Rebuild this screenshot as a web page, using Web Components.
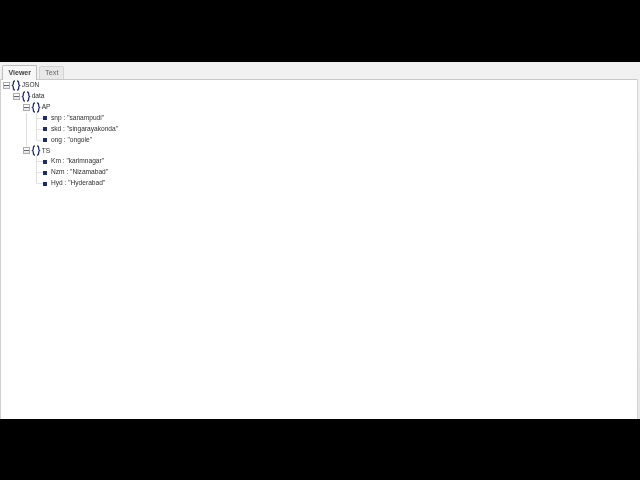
<!DOCTYPE html>
<html>
<head>
<meta charset="utf-8">
<title>JSON Viewer</title>
<style>
  html, body { margin: 0; background: #000; height: 100%; overflow: hidden; }
  body { font-family: "Liberation Sans", Arial, sans-serif; }
</style>
</head>
<body>
<viewer-window>
  <viewer-tab slot="tabs" active>Viewer</viewer-tab>
  <viewer-tab slot="tabs">Text</viewer-tab>
  <tree-node label="JSON" root last>
    <tree-node label="data" last>
      <tree-node label="AP">
        <tree-leaf>snp : "sanampudi"</tree-leaf>
        <tree-leaf>skd : "singarayakonda"</tree-leaf>
        <tree-leaf last>ong : "ongole"</tree-leaf>
      </tree-node>
      <tree-node label="TS" last>
        <tree-leaf>Km : "karimnagar"</tree-leaf>
        <tree-leaf>Nzm : "Nizamabad"</tree-leaf>
        <tree-leaf last>Hyd : "Hyderabad"</tree-leaf>
      </tree-node>
    </tree-node>
  </tree-node>
</viewer-window>
<script>
class ViewerWindow extends HTMLElement {
  constructor() {
    super();
    this.attachShadow({ mode: "open" });
    this.shadowRoot.innerHTML = `
    <style>
      :host {
        display: flex;
        flex-direction: column;
        height: 357px;
        margin-top: 62px;
        background: linear-gradient(#f1f1f1, #e4e4e4);
        filter: blur(.4px);
      }
      .tabs {
        display: flex;
        align-items: flex-end;
        gap: 2px;
        height: 17px;
        padding-left: 2px;
        flex: none;
      }
      .panel {
        flex: 1;
        background: #fff;
        margin-left: 1px;
        margin-right: 3px;
        border-top: 1px solid #c9c9c9;
        padding: .2px 0 0 2px;
        box-shadow: -1px 0 0 #cfcfcf, 1px 0 0 #d4d4d4;
      }
    </style>
    <div class="tabs"><slot name="tabs"></slot></div>
    <div class="panel"><slot></slot></div>
    `;
  }
}

class ViewerTab extends HTMLElement {
  constructor() {
    super();
    this.attachShadow({ mode: "open" });
    this.shadowRoot.innerHTML = `
    <style>
      :host {
        display: block;
        box-sizing: border-box;
        height: 13px;
        padding: 0 4.5px;
        font: 7.4px/12px "Liberation Sans", Arial, sans-serif;
        color: #666;
        background: #e8e8e8;
        border: 1px solid #d4d4d4;
        border-bottom: none;
        border-radius: 2px 2px 0 0;
      }
      :host([active]) {
        height: 15px;
        margin-bottom: -1px;
        line-height: 14px;
        padding: 0 5.5px;
        font-size: 7px;
        font-weight: bold;
        color: #3c3c3c;
        background: #f7f7f7;
        border-color: #bdbdbd;
        position: relative;
        z-index: 1;
      }
    </style>
    <slot></slot>
    `;
  }
}

class TreeNode extends HTMLElement {
  constructor() {
    super();
    this.attachShadow({ mode: "open" });
  }

  connectedCallback() {
    this.shadowRoot.innerHTML = `
    <style>
      :host {
        display: block;
        font: 6.6px/10.9px "Liberation Sans", Arial, sans-serif;
        color: #2e2e2e;
      }
      :host(:not([root])) { margin-left: 6px; }
      .row {
        display: flex;
        align-items: center;
        height: 10.9px;
      }
      .expander {
        flex: none;
        box-sizing: border-box;
        width: 7px;
        height: 7px;
        margin-right: 1px;
        border: 1px solid #aaacb2;
        background: linear-gradient(#fff, #e4e7ec);
        display: flex;
        align-items: center;
        justify-content: center;
      }
      .expander::before {
        content: "";
        width: 5px;
        height: 1px;
        background: #666;
      }
      svg { flex: none; display: block; margin-right: .7px; }
      .children {
        margin-left: 3px;
        border-left: 1px solid #dedede;
      }
      :host([last]) .children { border-left-color: transparent; }
    </style>
    <div class="row">
      <span class="expander"></span>
      <svg width="10" height="11" viewBox="0 0 10 11" fill="none" stroke="#1d2a6e" stroke-width="1.25">
        <path d="M4 .8C2.5 .8 2.3 2 2.3 3.4S2.3 5 1.5 5.5C2.3 6 2.3 6.2 2.3 7.6S2.5 10.2 4 10.2"/>
        <path d="M6 .8C7.5 .8 7.7 2 7.7 3.4S7.7 5 8.5 5.5C7.7 6 7.7 6.2 7.7 7.6S7.5 10.2 6 10.2"/>
      </svg>
      <span>${this.getAttribute("label")}</span>
    </div>
    <div class="children"><slot></slot></div>
    `;
  }
}

class TreeLeaf extends HTMLElement {
  constructor() {
    super();
    this.attachShadow({ mode: "open" });
    this.shadowRoot.innerHTML = `
    <style>
      :host {
        display: flex;
        align-items: center;
        height: 10.9px;
        margin-left: 9px;
        font: 6.6px/10.9px "Liberation Sans", Arial, sans-serif;
        color: #2e2e2e;
        white-space: pre;
        background: linear-gradient(#dedede, #dedede) no-repeat 0 0 / 1px 100%;
      }
      :host([last]) { background-size: 1px 50%; }
      .dash {
        flex: none;
        width: 6px;
        height: 1px;
        margin-left: 1px;
        background: #e2e2e2;
      }
      .bullet {
        flex: none;
        width: 4px;
        height: 4px;
        margin-right: 4px;
        background: #1d2a6e;
      }
    </style>
    <span class="dash"></span><span class="bullet"></span><span><slot></slot></span>
    `;
  }
}

customElements.define("viewer-window", ViewerWindow);
customElements.define("viewer-tab", ViewerTab);
customElements.define("tree-node", TreeNode);
customElements.define("tree-leaf", TreeLeaf);
</script>
</body>
</html>
